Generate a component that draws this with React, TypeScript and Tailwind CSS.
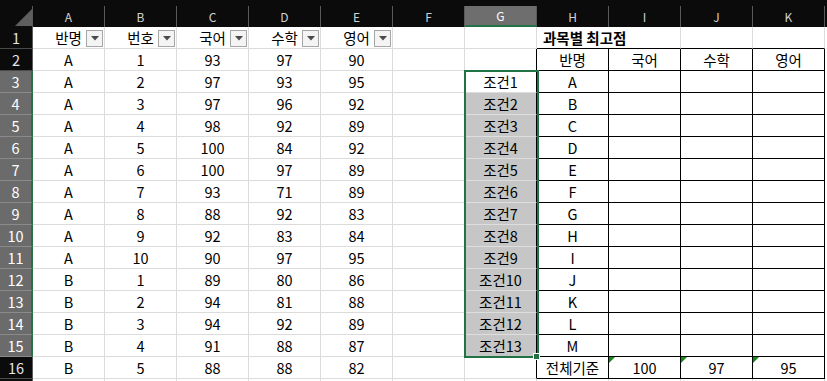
import React from 'react';

const COLS = ['A', 'B', 'C', 'D', 'E', 'F', 'G', 'H', 'I', 'J', 'K'];

const data: (string | number)[][] = [
  ['A', 1, 93, 97, 90],
  ['A', 2, 97, 93, 95],
  ['A', 3, 97, 96, 92],
  ['A', 4, 98, 92, 89],
  ['A', 5, 100, 84, 92],
  ['A', 6, 100, 97, 89],
  ['A', 7, 93, 71, 89],
  ['A', 8, 88, 92, 83],
  ['A', 9, 92, 83, 84],
  ['A', 10, 90, 97, 95],
  ['B', 1, 89, 80, 86],
  ['B', 2, 94, 81, 88],
  ['B', 3, 94, 92, 89],
  ['B', 4, 91, 88, 87],
  ['B', 5, 88, 88, 82],
];

const headers = ['반명', '번호', '국어', '수학', '영어'];
const classes = ['A', 'B', 'C', 'D', 'E', 'F', 'G', 'H', 'I', 'J', 'K', 'L', 'M'];

type CellProps = {
  children?: React.ReactNode;
  rBlack?: boolean;
  bBlack?: boolean;
  gray?: boolean;
  filter?: boolean;
  marker?: boolean;
};

const FilterButton = () => (
  <div className="absolute right-[1px] bottom-[1px] w-[17px] h-[17px] border border-[#a6a6a6] bg-[#f4f4f4] flex items-center justify-center">
    <svg width="8" height="5" viewBox="0 0 8 5">
      <path d="M0 0 L8 0 L4 4.5 Z" fill="#4a4a4a" />
    </svg>
  </div>
);

const Cell: React.FC<CellProps> = ({ children, rBlack, bBlack, gray, filter, marker }) => (
  <div
    className={`relative w-[72px] shrink-0 h-full flex items-center justify-center border-r border-b ${
      rBlack ? 'border-r-black' : gray ? 'border-r-[#d9d9d9]' : 'border-r-[#dcdcdc]'
    } ${bBlack ? 'border-b-black' : gray ? 'border-b-[#dedede]' : 'border-b-[#dcdcdc]'} ${
      gray ? 'bg-[#c6c6c6]' : 'bg-white'
    }`}
  >
    {marker && (
      <svg className="absolute top-0 left-0" width="6" height="6" viewBox="0 0 6 6">
        <path d="M0 0 L6 0 L0 6 Z" fill="#14891a" />
      </svg>
    )}
    <span className="text-black">{children}</span>
    {filter && <FilterButton />}
  </div>
);

const RowHeader = ({ n, selected }: { n: number; selected: boolean }) => (
  <div
    className={`w-[33px] shrink-0 h-full flex items-center justify-center border-b ${
      selected
        ? 'bg-[#6b6b6b] text-white border-b-[#8a8a8a] border-r-2 border-r-[#217346]'
        : 'bg-[#0b0b0b] text-[#e4e4e4] border-b-[#4a4a4a] border-r border-r-[#5a5a5a]'
    }`}
  >
    {n <= 16 ? n : null}
  </div>
);

export default function App() {
  const rows = Array.from({ length: 17 }, (_, i) => i + 1);

  const renderRow = (r: number) => {
    const sel = r >= 3 && r <= 15;
    const cells: React.ReactNode[] = [];

    // A - E
    for (let c = 0; c < 5; c++) {
      let v: React.ReactNode = null;
      if (r === 1) v = headers[c];
      else if (r >= 2 && r <= 16) v = data[r - 2][c];
      cells.push(
        <Cell key={c} filter={r === 1}>
          {v}
        </Cell>
      );
    }
    // F
    cells.push(<Cell key="F" />);
    // G
    cells.push(
      <Cell key="G" gray={r >= 4 && r <= 15} rBlack={r >= 2 && r <= 16}>
        {sel ? `조건${r - 2}` : null}
      </Cell>
    );
    // H - K
    const inTable = r >= 2 && r <= 16;
    const tableTop = r === 1;
    let h: React.ReactNode = null;
    let i: React.ReactNode = null;
    let j: React.ReactNode = null;
    let k: React.ReactNode = null;
    if (r === 2) {
      h = '반명';
      i = '국어';
      j = '수학';
      k = '영어';
    } else if (sel) {
      h = classes[r - 3];
    } else if (r === 16) {
      h = '전체기준';
      i = 100;
      j = 97;
      k = 95;
    }
    if (r === 1) {
      cells.push(
        <div
          key="H"
          className="relative w-[144px] shrink-0 h-full flex items-center border-b border-b-black border-r border-r-[#dcdcdc] pl-[6px] font-bold text-black"
        >
          과목별 최고점
        </div>
      );
    } else {
      cells.push(
        <Cell key="H" rBlack={inTable} bBlack={inTable || tableTop}>
          {h}
        </Cell>
      );
      cells.push(
        <Cell key="I" rBlack={inTable} bBlack={inTable || tableTop} marker={r === 16}>
          {i}
        </Cell>
      );
    }
    cells.push(
      <Cell key="J" rBlack={inTable} bBlack={inTable || tableTop} marker={r === 16}>
        {j}
      </Cell>
    );
    cells.push(
      <Cell key="K" rBlack={inTable} bBlack={inTable || tableTop} marker={r === 16}>
        {k}
      </Cell>
    );

    return (
      <div key={r} className="flex h-[22px]">
        <RowHeader n={r} selected={sel} />
        {cells}
      </div>
    );
  };

  return (
    <div
      className="relative w-[827px] h-[381px] overflow-hidden bg-white text-[14.5px]"
      style={{ fontFamily: '"Noto Sans CJK KR", "Noto Sans", sans-serif' }}
    >
      {/* column headers */}
      <div className="flex h-[27px] bg-[#0b0b0b]">
        <div className="relative w-[33px] shrink-0 h-full">
          <div className="absolute right-0 top-[6px] bottom-0 w-px bg-[#5a5a5a]" />
          <svg className="absolute right-[1px] bottom-[1px]" width="17" height="17" viewBox="0 0 17 17">
            <path d="M17 0 L17 17 L0 17 Z" fill="#5e5e5e" />
          </svg>
        </div>
        {COLS.map((c) => (
          <div key={c} className="w-[72px] shrink-0 h-full flex flex-col">
            <div className="h-[6px]" />
            <div
              className={`flex-1 flex items-center justify-center text-[12px] border-r border-r-[#5a5a5a] ${
                c === 'G' ? 'bg-[#6e6e6e] text-white border-b-2 border-b-[#217346]' : 'text-[#d2d2d2]'
              }`}
            >
              {c}
            </div>
          </div>
        ))}
      </div>

      {rows.map(renderRow)}

      {/* selection outline G3:G15 */}
      <div className="absolute left-[464px] top-[70px] w-[75px] h-[288px] border-2 border-[#217346] pointer-events-none" />
      <div className="absolute left-[533px] top-[353px] w-[7px] h-[7px] bg-[#217346] border border-white" />
    </div>
  );
}
